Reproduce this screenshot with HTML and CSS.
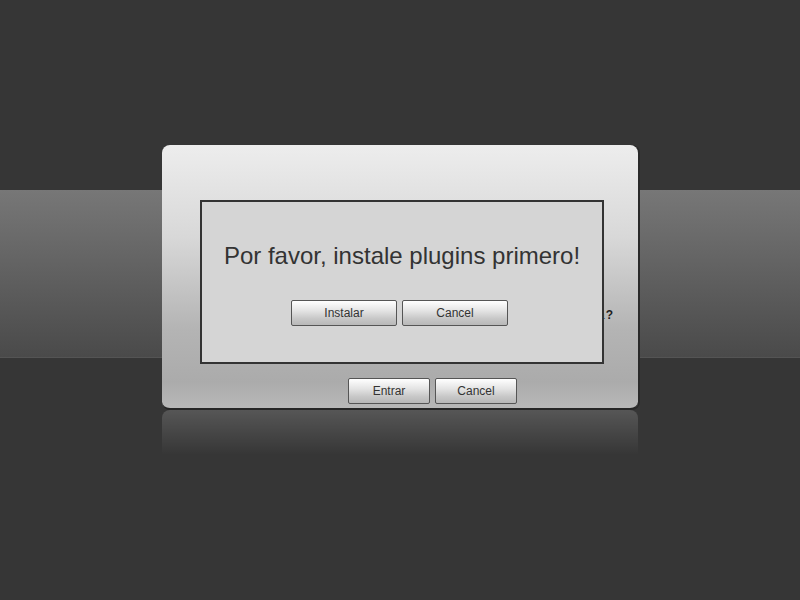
FILE: index.html
```html
<!DOCTYPE html>
<html lang="es">
<head>
<meta charset="utf-8">
<title>Login</title>
<link rel="stylesheet" href="styles.css">
</head>
<body>
<div class="page">
  <div class="top"></div>
  <div class="band"></div>
</div>
<div class="login">
  <div class="login-form">
    <span class="forgot"><span class="forgot-link">contraseña</span><b class="forgot-mark">?</b></span>
  </div>
  <div class="login-actions">
    <button class="btn btn-wide">Entrar</button>
    <button class="btn btn-wide">Cancel</button>
  </div>
  <div class="plugin">
    <p class="plugin-msg">Por favor, instale plugins primero!</p>
    <div class="plugin-actions">
      <button class="btn btn-big">Instalar</button>
      <button class="btn btn-big">Cancel</button>
    </div>
  </div>
</div>
<div class="reflection"></div>
</body>
</html>
```
FILE: styles.css
```css
html, body {
  margin: 0;
  padding: 0;
  height: 100%;
}
body {
  background: #363636;
  font-family: "Liberation Sans", Arial, sans-serif;
  overflow: hidden;
}
.page {
  display: flex;
  flex-direction: column;
}
.top {
  height: 190px;
}
.band {
  height: 167px;
  background: linear-gradient(#777777, #4a4a4a);
  border-bottom: 1px solid #545454;
}
.login {
  position: absolute;
  left: 162px;
  top: 145px;
  width: 476px;
  height: 263px;
  border-radius: 8px;
  background: linear-gradient(#ededed 0%, #d8d8d8 35%, #b4b4b4 70%, #ababab 90%, #b8b8b8 100%);
  border-bottom: 2px solid #262626;
  box-shadow: 2px 0 0 #2a2a2a;
  display: flex;
  flex-direction: column;
}
.login-form {
  height: 233px;
  position: relative;
}
.forgot {
  position: absolute;
  right: 25px;
  top: 163px;
  font-size: 12px;
  color: #222;
}
.forgot-link {
  color: #2244aa;
}
.forgot-mark {
  margin-left: 1px;
  color: #1e1e1e;
}
.login-actions {
  display: flex;
  justify-content: center;
  gap: 5px;
  padding-left: 65px;
}
.btn {
  height: 26px;
  box-sizing: border-box;
  border: 1px solid #555;
  border-radius: 2px;
  background: linear-gradient(#ffffff 0%, #e4e4e4 40%, #c6c6c6 75%, #b8b8b8 100%);
  color: #333;
  font-family: "Liberation Sans", Arial, sans-serif;
  font-size: 12px;
  padding: 0;
  cursor: pointer;
}
.btn-wide {
  width: 82px;
}
.btn-big {
  width: 106px;
}
.plugin {
  position: absolute;
  left: 38px;
  top: 55px;
  width: 404px;
  height: 164px;
  box-sizing: border-box;
  border: 2px solid #333;
  background: #d5d5d5;
  display: flex;
  flex-direction: column;
  align-items: center;
}
.plugin-msg {
  margin: 40px 0 0;
  font-size: 24px;
  line-height: 28px;
  color: #333;
}
.plugin-actions {
  margin-top: 30px;
  display: flex;
  gap: 5px;
  padding-right: 5px;
}
.reflection {
  position: absolute;
  left: 162px;
  top: 410px;
  width: 476px;
  height: 45px;
  border-radius: 8px 8px 0 0;
  background: linear-gradient(rgba(255,255,255,0.16), rgba(255,255,255,0));
}
```
